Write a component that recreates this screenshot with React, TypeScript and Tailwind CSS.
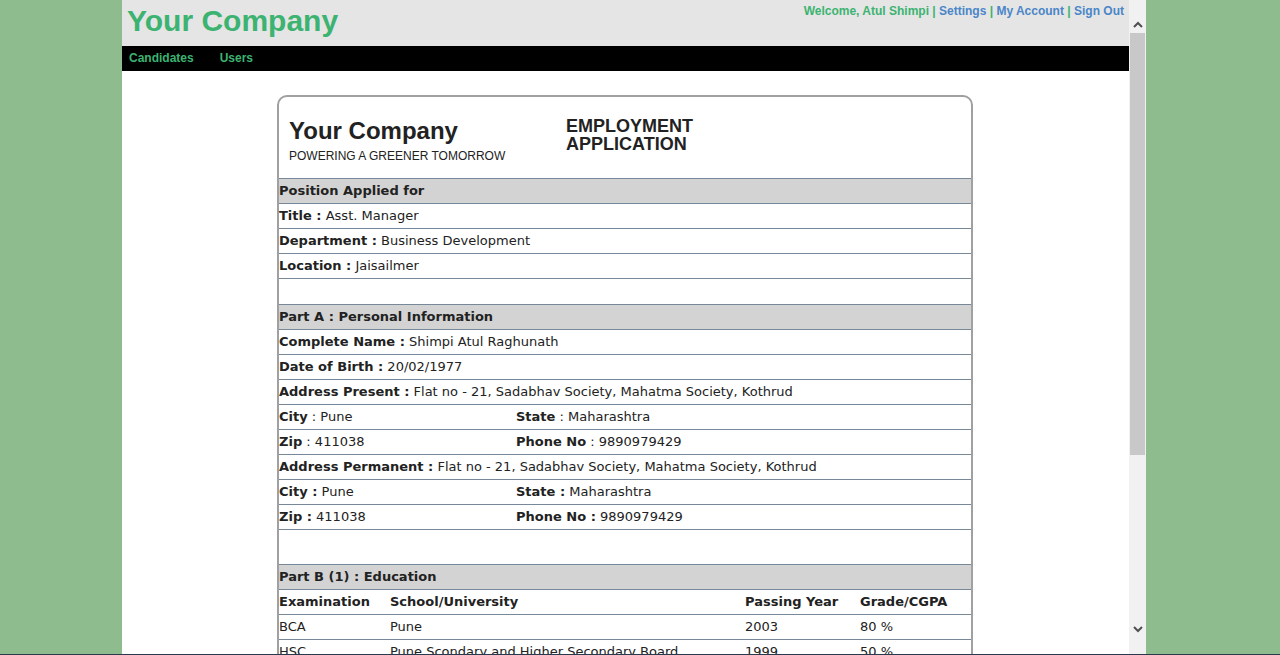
import React from "react";

const body = { fontFamily: '"DejaVu Sans", Verdana, sans-serif' };
const arial = { fontFamily: '"Liberation Sans", Arial, sans-serif' };

function Row({ children, className = "" }: { children?: React.ReactNode; className?: string }) {
  return (
    <div className={`flex items-center h-[25px] border-b border-[#778899] shrink-0 ${className}`}>
      {children}
    </div>
  );
}

function Section({ title }: { title: string }) {
  return (
    <Row className="bg-[#d3d3d3] font-bold">
      <span>{title}</span>
    </Row>
  );
}

function Field({ label, value, boldColon = true }: { label: string; value: string; boldColon?: boolean }) {
  return (
    <span>
      <b>{label}{boldColon ? " :" : ""}</b>
      {boldColon ? " " : " : "}
      {value}
    </span>
  );
}

const education = [
  { exam: "BCA", school: "Pune", year: "2003", grade: "80 %" },
  { exam: "HSC", school: "Pune Scondary and Higher Secondary Board", year: "1999", grade: "50 %" },
  { exam: "SSC", school: "Pune Scondary and Higher Secondary Board", year: "1997", grade: "60 %" },
];

function Scrollbar() {
  return (
    <div className="w-[17px] h-full bg-[#f1f1f1] flex flex-col items-center shrink-0">
      <div className="h-[33px] w-full flex items-end justify-center pb-[5px] shrink-0">
        <svg width="10" height="7" viewBox="0 0 10 7">
          <path d="M1 6 L5 2 L9 6" stroke="#505050" strokeWidth="2" fill="none" />
        </svg>
      </div>
      <div className="w-[15px] h-[422px] bg-[#c8c8c8] shrink-0" />
      <div className="flex-1" />
      <div className="h-[30px] w-full flex items-start justify-center pt-[2px] shrink-0">
        <svg width="10" height="7" viewBox="0 0 10 7">
          <path d="M1 1 L5 5 L9 1" stroke="#505050" strokeWidth="2" fill="none" />
        </svg>
      </div>
    </div>
  );
}

export default function App() {
  return (
    <div className="w-[1280px] h-[655px] bg-[#8fbc8f] flex flex-col overflow-hidden">
      <div className="flex flex-1 min-h-0 pl-[122px]">
        <div className="w-[1007px] h-full bg-white overflow-hidden flex flex-col">
          <div className="h-[46px] shrink-0 bg-[#e5e5e5] flex justify-between" style={arial}>
            <div className="pl-[5px] pt-[3px] text-[30px] leading-[36px] font-bold text-[#3cb371]">
              Your Company
            </div>
            <div className="pr-[5px] pt-[3px] text-[12px] leading-[16px] font-bold text-[#3cb371]">
              Welcome, Atul Shimpi | <span className="text-[#4a86c8]">Settings</span> |{" "}
              <span className="text-[#4a86c8]">My Account</span> |{" "}
              <span className="text-[#4a86c8]">Sign Out</span>
            </div>
          </div>
          <div className="h-[25px] shrink-0 bg-black flex items-center gap-[26px] pl-[7px] pb-[1px] text-[12px] font-bold text-[#3cb371]" style={arial}>
            <span>Candidates</span>
            <span>Users</span>
          </div>

          <div className="pt-[24px] pl-[155px] shrink-0">
            <div
              className="w-[696px] border-2 border-[#a0a0a0] rounded-t-[10px] text-[13px] text-[#222] flex flex-col"
              style={body}
            >
              <div className="h-[82px] flex border-b border-[#778899] shrink-0">
                <div className="w-[287px] pl-[10px] pt-[20px]" style={arial}>
                  <div className="text-[24px] leading-[28px] font-bold text-[#222]">Your Company</div>
                  <div className="text-[12px] leading-[14px] mt-[4px] text-[#222]">POWERING A GREENER TOMORROW</div>
                </div>
                <div className="pt-[20px] text-[18px] leading-[18px] font-bold text-[#222]" style={arial}>
                  EMPLOYMENT
                  <br />
                  APPLICATION
                </div>
              </div>

              <Section title="Position Applied for" />
              <Row><Field label="Title" value="Asst. Manager" /></Row>
              <Row><Field label="Department" value="Business Development" /></Row>
              <Row><Field label="Location" value="Jaisailmer" /></Row>
              <Row className="h-[26px]" />

              <Section title="Part A : Personal Information" />
              <Row><Field label="Complete Name" value="Shimpi Atul Raghunath" /></Row>
              <Row><Field label="Date of Birth" value="20/02/1977" /></Row>
              <Row><Field label="Address Present" value="Flat no - 21, Sadabhav Society, Mahatma Society, Kothrud" /></Row>
              <Row>
                <div className="w-[237px]"><Field label="City" value="Pune" boldColon={false} /></div>
                <Field label="State" value="Maharashtra" boldColon={false} />
              </Row>
              <Row>
                <div className="w-[237px]"><Field label="Zip" value="411038" boldColon={false} /></div>
                <Field label="Phone No" value="9890979429" boldColon={false} />
              </Row>
              <Row><Field label="Address Permanent" value="Flat no - 21, Sadabhav Society, Mahatma Society, Kothrud" /></Row>
              <Row>
                <div className="w-[237px]"><Field label="City" value="Pune" /></div>
                <Field label="State" value="Maharashtra" />
              </Row>
              <Row>
                <div className="w-[237px]"><Field label="Zip" value="411038" /></div>
                <Field label="Phone No" value="9890979429" />
              </Row>
              <Row className="h-[35px]" />

              <Section title="Part B (1) : Education" />
              <Row className="font-bold">
                <div className="w-[111px]">Examination</div>
                <div className="w-[355px]">School/University</div>
                <div className="w-[115px]">Passing Year</div>
                <div>Grade/CGPA</div>
              </Row>
              {education.map((e) => (
                <Row key={e.exam}>
                  <div className="w-[111px]">{e.exam}</div>
                  <div className="w-[355px]">{e.school}</div>
                  <div className="w-[115px]">{e.year}</div>
                  <div>{e.grade}</div>
                </Row>
              ))}
            </div>
          </div>
        </div>
        <Scrollbar />
      </div>
      <div className="h-[1px] bg-[#2b3a4a] shrink-0" />
    </div>
  );
}
